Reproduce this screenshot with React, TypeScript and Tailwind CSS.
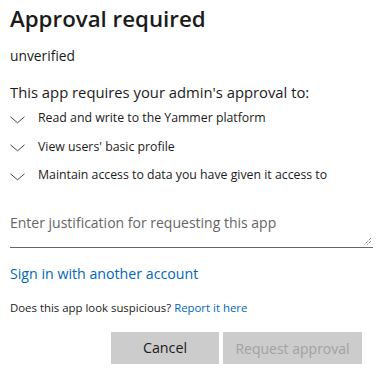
export default function App() {
  const permissions = [
    'Read and write to the Yammer platform',
    "View users' basic profile",
    'Maintain access to data you have given it access to',
  ]

  return (
    <div
      className="w-[383px] h-[380px] bg-white text-[#1b1b1b] px-[10px] pt-[3px]"
      style={{ fontFamily: '"Segoe UI", "Open Sans", sans-serif' }}
    >
      <h1 className="text-[22.3px] leading-[32px] font-semibold">Approval required</h1>
      <div className="text-[13.8px] leading-[20px] mt-[11px]">unverified</div>

      <div className="text-[14.8px] leading-[20px] mt-[16px]">
        This app requires your admin's approval to:
      </div>

      <ul className="mt-[6px] flex flex-col gap-[8.5px]">
        {permissions.map(p => (
          <li key={p} className="flex items-center gap-[13px] text-[12.3px] leading-[20px]">
            <svg width="15" height="8" viewBox="0 0 15 8" className="shrink-0 mt-[3px]">
              <path d="M0.5 0.8 L7.5 6.8 L14.5 0.8" fill="none" stroke="#444" strokeWidth="1" />
            </svg>
            <span>{p}</span>
          </li>
        ))}
      </ul>

      <div className="relative mt-[28px] border-b border-[#666] h-[35px]">
        <div className="text-[14px] leading-[20px] text-[#666]">
          Enter justification for requesting this app
        </div>
        <svg width="9" height="9" viewBox="0 0 9 9" className="absolute right-[1px] bottom-[1px]">
          <path d="M8 1 L1 8 M8 4 L4 8" stroke="#555" strokeWidth="1" strokeDasharray="1 1" />
        </svg>
      </div>

      <a className="block mt-[16px] text-[14.2px] leading-[20px] text-[#0067b8]">
        Sign in with another account
      </a>

      <div className="mt-[16px] text-[11.4px] leading-[16px]">
        Does this app look suspicious? <span className="text-[#0067b8]">Report it here</span>
      </div>

      <div className="mt-[16px] flex justify-end gap-[4px] pr-[11px]">
        <button className="w-[108px] h-[32px] bg-[#cccccc] text-[14.3px] text-[#1b1b1b]">Cancel</button>
        <button className="w-[139px] h-[32px] bg-[#cccccc] text-[14px] text-[#a2a2a2]">
          Request approval
        </button>
      </div>
    </div>
  )
}
